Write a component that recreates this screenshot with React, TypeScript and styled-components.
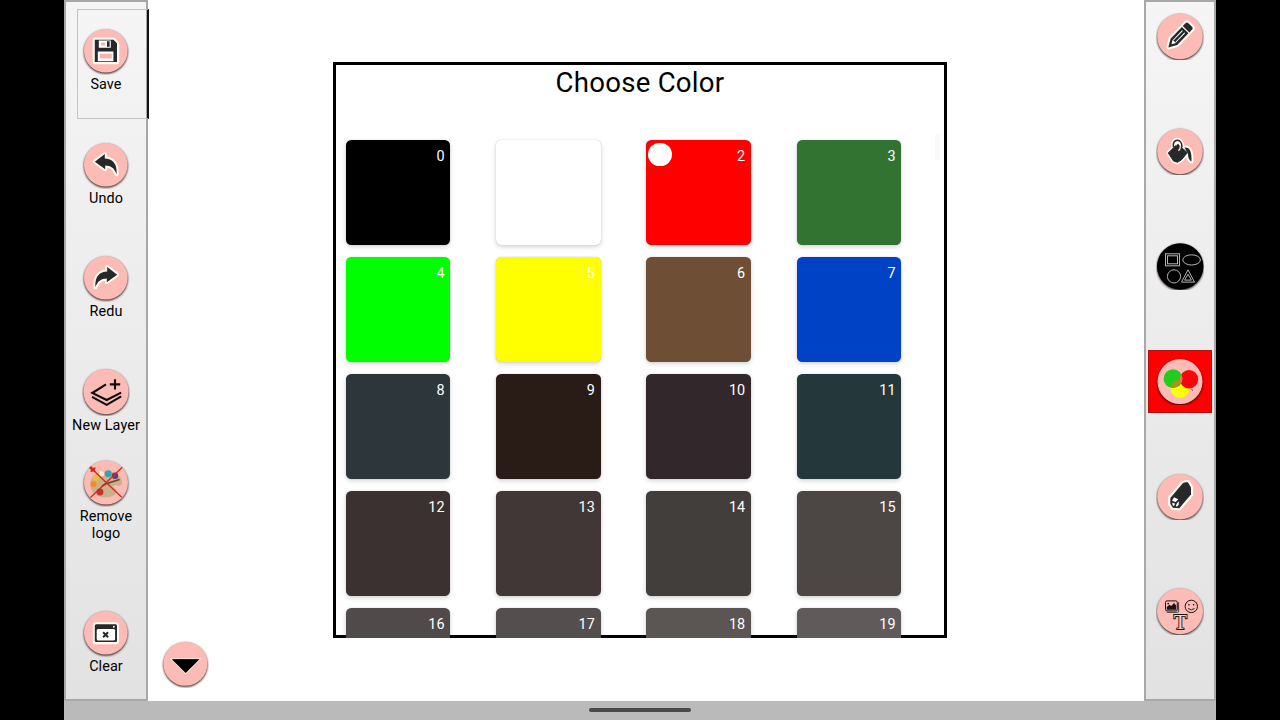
import React, { FC, ReactNode } from 'react';
import styled, { createGlobalStyle } from 'styled-components';

const GlobalStyle = createGlobalStyle`
  body {
    background-color: #000;
    color: #000;
    font-family: Roboto, "Liberation Sans", sans-serif;
    margin: 0;
  }
`;

const Screen = styled.div`
  display: flex;
  flex-direction: column;
  height: 720px;
  margin: 0 auto;
  overflow: hidden;
  width: 1152px;
`;

const Workspace = styled.div`
  background-color: #fff;
  display: flex;
  height: 701px;
`;

const SidePanel = styled.div<{ $width: number }>`
  align-items: center;
  background-image: linear-gradient(#f5f5f5, #e2e2e2);
  border: 2px solid #a8a8a8;
  box-sizing: border-box;
  display: flex;
  flex: none;
  flex-direction: column;
  width: ${(props) => props.$width}px;
`;

const Action = styled.div<{ $gap: number }>`
  align-items: center;
  display: flex;
  flex-direction: column;
  margin-top: ${(props) => props.$gap}px;
`;

const FocusedAction = styled(Action)`
  align-self: flex-start;
  border: 1px solid #c3c3c3;
  border-right: 2px solid #111;
  box-sizing: border-box;
  height: 110px;
  margin-left: 11px;
  padding: 17px 13px 0 0;
  width: 72px;
`;

const ActionLabel = styled.div`
  font-size: 14.4px;
  letter-spacing: 0.1px;
  line-height: 17px;
  margin-top: 1px;
  text-align: center;
  white-space: pre;
`;

const Tool = styled.div<{ $selected?: boolean }>`
  background-color: ${(props) => (props.$selected ? '#fe0000' : 'transparent')};
  box-shadow: ${(props) => (props.$selected ? 'inset 0 0 0 1px #b51010' : 'none')};
  box-sizing: border-box;
  display: flex;
  height: 63px;
  justify-content: center;
  padding-top: 7px;
  width: 64px;
`;

const ToolList = styled.div`
  display: flex;
  flex-direction: column;
  gap: 52px;
  padding-top: 3px;
`;

const Canvas = styled.div`
  flex: 1;
`;

const Dialog = styled.div`
  box-shadow: inset 0 0 0 3px #000;
  box-sizing: border-box;
  height: 576px;
  margin: 62px 0 0 185px;
  overflow: hidden;
  padding: 3px;
  width: 614px;
`;

const DialogTitle = styled.div`
  font-size: 27.6px;
  letter-spacing: 0.25px;
  line-height: 36px;
  text-align: center;
`;

const DialogBody = styled.div`
  display: flex;
  justify-content: space-between;
  padding-top: 33px;
`;

const ScrollThumb = styled.div`
  background-color: #f9f9f9;
  height: 26px;
  margin-right: 4px;
  width: 5px;
`;

const Palette = styled.div`
  display: grid;
  gap: 12.5px 45.8px;
  grid-template-columns: repeat(4, 104.5px);
  padding: 6.3px 0 0 9.8px;
`;

const Swatch = styled.div<{ $color: string }>`
  background-color: ${(props) => props.$color};
  border-radius: 5.5px;
  box-shadow: 0 2px 5px rgba(0, 0, 0, 0.16), 0 0 1px rgba(0, 0, 0, 0.3);
  box-sizing: border-box;
  color: #fff;
  display: flex;
  font-size: 14.4px;
  height: 104.5px;
  justify-content: space-between;
  letter-spacing: 0.1px;
  line-height: 17px;
  padding: 7.5px 5.6px 0 2px;
`;

const Marker = styled.div<{ $visible: boolean }>`
  background-color: ${(props) => (props.$visible ? '#fff' : 'transparent')};
  border-radius: 50%;
  height: 23.5px;
  margin-top: -5px;
  width: 23.5px;
`;

const Collapse = styled.div`
  height: 48px;
  margin: 2px 0 0 13px;
  width: 48px;
`;

const NavBar = styled.div`
  background-color: #bababa;
  box-sizing: border-box;
  display: flex;
  height: 19px;
  justify-content: center;
  padding-top: 7px;
`;

const NavHandle = styled.div`
  background-color: #4a4a4a;
  border-radius: 2px;
  height: 4px;
  width: 102px;
`;

const IconSvg = styled.svg`
  display: block;
  flex: none;
  height: 48px;
  width: 48px;
`;

const Disc = styled.circle`
  filter: drop-shadow(0.9px 1.6px 0.9px rgba(25, 0, 0, 0.95));
`;

type DiscIconProps = {
  cx?: number;
  cy?: number;
  r?: number;
  fill?: string;
  children: ReactNode;
};

const DiscIcon: FC<DiscIconProps> = ({ cx = 23.8, cy = 23.8, r = 21.8, fill = '#fdbbb5', children }) => (
  <IconSvg viewBox="0 0 48 48" fill="none">
    <Disc cx={cx} cy={cy} r={r} fill={fill} />
    {children}
  </IconSvg>
);

const ink = '#262829';
const halo = '#fffaf0';

const floppy = 'M12.8 12.8h18.7l3.5 3.5V35H12.8z';

const SaveIcon = () => (
  <DiscIcon>
    <path d={floppy} fill={ink} stroke={halo} strokeWidth="4.5" strokeLinejoin="round" />
    <path d={floppy} fill={ink} />
    <path d="M16.8 13.6h12v7.2h-12zM15.8 24.6h15.6v9.6H15.8z" fill="#fff" />
    <path d="M19 15.6h4.2v2.8H19zM17.8 26.8h12v4.8h-12z" fill="#f9b4ae" />
    <path d="M25 14.2h2.6v5.6H25z" fill={ink} />
  </DiscIcon>
);

const arrow = 'M12.8 20.7L22.8 13v4.5C30 17.5 35.4 22 34.6 33.3C32.5 27 29 24.6 23.2 24.4v3.8z';

const UndoIcon = () => (
  <DiscIcon>
    <path d={arrow} fill={ink} stroke={halo} strokeWidth="4" strokeLinejoin="round" />
    <path d={arrow} fill={ink} />
  </DiscIcon>
);

const RedoIcon = () => (
  <DiscIcon>
    <g transform="matrix(-1 0 0 1 48 0)">
      <path d={arrow} fill={ink} stroke={halo} strokeWidth="4" strokeLinejoin="round" />
      <path d={arrow} fill={ink} />
    </g>
  </DiscIcon>
);

const LayerIcon = () => (
  <DiscIcon cx={24} cy={23.6} r={22.6}>
    <path
      d="M24 16.4L10.3 25l14.4 7 14.4-7.4M10 28.8l14.7 8 14.5-8.4M33 11.2v10.4M27.8 16.4h10.4"
      stroke="#0c0c0c"
      strokeWidth="2.1"
    />
  </DiscIcon>
);

const RemoveLogoIcon = () => (
  <DiscIcon cx={24} cy={23.6} r={22}>
    <path
      d="M8.5 23C10 15 18 11 27 12.5c7 .5 12.500 4.500 13 10 .5 4-3 5-5 4-3-1-5 1-2.500 3 3 1 3 5-1 7-5 2.500-11 2.500-16 .5C10.500 34.500 7.500 29 8.500 23z"
      fill="#cbb08a"
    />
    <circle cx="14" cy="18.7" r="3" fill="#f2c22e" />
    <circle cx="11.5" cy="25.3" r="3" fill="#ee8d2c" />
    <circle cx="18" cy="33" r="3.4" fill="#c1362a" />
    <circle cx="19.6" cy="14.7" r="2.6" fill="#f3ead9" />
    <circle cx="26.3" cy="14.7" r="3.4" fill="#2ca5b9" />
    <circle cx="33" cy="16.7" r="3.2" fill="#663a7c" />
    <path d="M20 27l5-2.6 12.5-4" stroke="#6c4137" strokeWidth="1.6" />
    <path d="M8.7 8.7l31 29.5M40.3 8.3L8.5 38.5" stroke="#d3261f" strokeWidth="1.2" />
    <path d="M9 7l1.8 1.7L14 8.5l-1.3 2.2L14 13l-3-.5L8.5 13l.3-2.5L7 9z" fill="#d3261f" />
  </DiscIcon>
);

const ClearIcon = () => (
  <DiscIcon>
    <rect x="10.7" y="13.2" width="26.3" height="22" rx="2.5" fill={halo} />
    <rect x="12.8" y="15.3" width="22.2" height="17.8" rx="1.5" fill={ink} />
    <rect x="14.7" y="20" width="18.4" height="11.5" rx="1.5" fill="#fff" />
    <circle cx="31.8" cy="17.7" r="1" fill="#fff" />
    <path d="M21.1 23.3l5 5M26.1 23.3l-5 5" stroke={ink} strokeWidth="2" />
  </DiscIcon>
);

const CollapseIcon = () => (
  <DiscIcon cx={24.4} cy={23.8} r={22}>
    <path d="M10.3 18.9h28.7L24.7 33.3z" fill="#000" stroke="#fde9dc" strokeWidth="1.4" />
    <path d="M10.8 19.3h27.7L24.7 33z" fill="#000" />
  </DiscIcon>
);

const PencilIcon = () => (
  <DiscIcon cx={24} cy={24.4} r={22.8}>
    <g transform="translate(12.3 35.6) rotate(-46)">
      <path d="M0 0L8-4.6H29.5a2 2 0 012 2v5.2a2 2 0 01-2 2H8z" fill={halo} stroke={halo} strokeWidth="4" strokeLinejoin="round" />
      <path d="M0 0L8-4.6H24.3V4.6H8z" fill={ink} />
      <path d="M25.6-4.6h3.9a2 2 0 012 2v5.2a2 2 0 01-2 2h-3.9z" fill={ink} />
      <path d="M4.5 0L8.7-2.4V2.4z" fill="#fff" />
      <path d="M9-1.6h13M9 1.6h13" stroke="#fff" strokeWidth="1" />
    </g>
  </DiscIcon>
);

const bucket = 'M12.3 26L21.5 16.8 31.3 25.7 25.5 32.8 21.5 35.3 17.5 34z';
const drip = 'M28.5 20.5C33 20 36 23 35.5 34.5C33.5 33.5 32 31 32 27z';

const BucketIcon = () => (
  <DiscIcon cx={24} cy={24.4} r={22.8}>
    <path d={`${bucket}${drip}`} fill={halo} stroke={halo} strokeWidth="4" strokeLinejoin="round" />
    <path d="M17.5 20c-1-4 1-7 3.8-7s4.7 3 4.7 8" stroke={halo} strokeWidth="4.5" />
    <path d={bucket} fill={ink} stroke={ink} strokeWidth="1" strokeLinejoin="round" />
    <path d={drip} fill={ink} />
    <path d="M17.5 20c-1-4 1-6.8 3.8-6.8s4.7 3 4.7 7" stroke={ink} strokeWidth="1.6" />
    <path d="M20 18.5c-.3-2.5 3.7-3 4.2 0 .3 2 .3 4-1.8 5.3" stroke={halo} strokeWidth="1.1" />
  </DiscIcon>
);

const ShapesIcon = () => (
  <DiscIcon cx={24.2} cy={24.4} r={23.2} fill="#000">
    <g stroke="#b4b4b4" strokeWidth="1">
      <rect x="9.5" y="11.8" width="14" height="12" />
      <rect x="11.5" y="13.8" width="10" height="8" />
      <ellipse cx="35.6" cy="17.9" rx="8.8" ry="5.1" />
      <circle cx="18" cy="34.4" r="6.6" />
      <path d="M32 27.8L25.5 40.1h13zM32 32.2l-3.4 5.9h6.8z" />
    </g>
  </DiscIcon>
);

const ColorsIcon = () => (
  <DiscIcon cx={24} cy={24.6} r={22.5}>
    <clipPath id="greenDot">
      <circle cx="17" cy="21.7" r="9.4" />
    </clipPath>
    <circle cx="24" cy="31.5" r="9.5" fill="#ffff00" />
    <circle cx="33" cy="22.2" r="9.2" fill="#f5070a" />
    <circle cx="17" cy="21.7" r="9.4" fill="#22cc1c" />
    <g clipPath="url(#greenDot)">
      <circle cx="24" cy="31.5" r="9.5" fill="#9b9a16" />
      <circle cx="33" cy="22.2" r="9.2" fill="#e77a55" />
    </g>
    <path d="M35.5 32.5l1.5 1" stroke="#702323" />
  </DiscIcon>
);

const eraser = 'M14.3 26L26.8 11.3q2.2-1.6 5.1-1l3.100 5.100v7.200L23.300 36.200l-6.500-.5-2.500-4z';

const EraserIcon = () => (
  <DiscIcon cx={24} cy={24.8} r={22.8}>
    <path d={eraser} fill={ink} stroke={halo} strokeWidth="4.5" strokeLinejoin="round" />
    <path d={eraser} fill={ink} />
    <path d="M18 25.3l4.2 1.9-2.6 2.8-3.6-1.200zM16.2 30.800l2.800.800-.9 2.400-1.400-.4zM20.700 31.600l2.100-2.400v3.600l-1.600 1.700-1.400-.2z" fill="#fff" />
  </DiscIcon>
);

const MediaIcon = () => (
  <DiscIcon cx={24} cy={24.2} r={23}>
    <rect x="9.5" y="13.9" width="11.8" height="10" rx="1.5" stroke="#171313" />
    <path d="M22.6 15.2v9.2q0 .9-1 .9H10.8" stroke="#171313" strokeWidth=".8" />
    <path d="M10.8 22.8v-2.7l2.7-2.3 1.8 1.1 2.7-2.9 2.2 2.4v4.4z" fill="#171313" />
    <circle cx="12.2" cy="16.6" r=".9" fill="#171313" />
    <circle cx="35.3" cy="19.4" r="6.2" stroke="#171313" strokeWidth="1" />
    <circle cx="33" cy="17.8" r=".8" fill="#171313" />
    <circle cx="37.6" cy="17.8" r=".8" fill="#171313" />
    <path d="M32 21.4q3.3 3 6.6 0" stroke="#171313" strokeWidth=".9" />
    <text
      x="24.4"
      y="42.3"
      fontFamily="Liberation Serif, serif"
      fontSize="21.5"
      textAnchor="middle"
      fill="#fbd0ca"
      stroke="#171313"
      strokeWidth="1.8"
      paintOrder="stroke"
    >
      T
    </text>
  </DiscIcon>
);

const actions = [
  { label: 'Undo', gap: 22, Icon: UndoIcon },
  { label: 'Redu', gap: 47, Icon: RedoIcon },
  { label: 'New Layer', gap: 48, Icon: LayerIcon },
  { label: 'Remove\nlogo', gap: 25, Icon: RemoveLogoIcon },
  { label: 'Clear', gap: 67, Icon: ClearIcon },
];

const tools = [
  { name: 'pencil', Icon: PencilIcon },
  { name: 'fill', Icon: BucketIcon },
  { name: 'shapes', Icon: ShapesIcon },
  { name: 'colors', Icon: ColorsIcon },
  { name: 'eraser', Icon: EraserIcon },
  { name: 'media', Icon: MediaIcon },
];

const colors = [
  '#000000', '#ffffff', '#ff0000', '#327332',
  '#00ff00', '#ffff00', '#6e4e34', '#0042c5',
  '#2d363a', '#291c17', '#32282c', '#24383c',
  '#3b3130', '#413737', '#423e3b', '#4c4744',
  '#504a4b', '#544e4f', '#5b5653', '#605b5a',
];

const selectedColor = 2;

const App: FC = () => {
  return (
    <>
      <GlobalStyle />
      <Screen>
        <Workspace>
          <SidePanel $width={84}>
            <FocusedAction $gap={7}>
              <SaveIcon />
              <ActionLabel>Save</ActionLabel>
            </FocusedAction>
            {actions.map(({ label, gap, Icon }) => (
              <Action key={label} $gap={gap}>
                <Icon />
                <ActionLabel>{label}</ActionLabel>
              </Action>
            ))}
          </SidePanel>
          <Canvas>
            <Dialog>
              <DialogTitle>Choose Color</DialogTitle>
              <DialogBody>
                <Palette>
                  {colors.map((color, index) => (
                    <Swatch key={color} $color={color}>
                      <Marker $visible={index === selectedColor} />
                      {index}
                    </Swatch>
                  ))}
                </Palette>
                <ScrollThumb />
              </DialogBody>
            </Dialog>
            <Collapse>
              <CollapseIcon />
            </Collapse>
          </Canvas>
          <SidePanel $width={72}>
            <ToolList>
              {tools.map(({ name, Icon }) => (
                <Tool key={name} $selected={name === 'colors'}>
                  <Icon />
                </Tool>
              ))}
            </ToolList>
          </SidePanel>
        </Workspace>
        <NavBar>
          <NavHandle />
        </NavBar>
      </Screen>
    </>
  );
};

export default App;
